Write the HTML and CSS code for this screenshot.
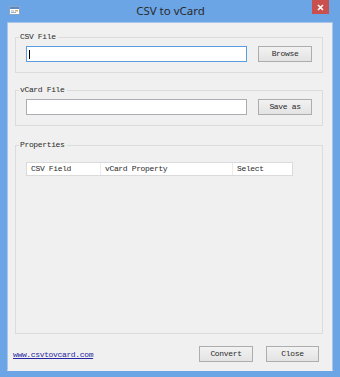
FILE: index.html
```html
<!DOCTYPE html>
<html>
<head>
<meta charset="utf-8">
<link rel="stylesheet" href="styles.css">
</head>
<body>
<div class="window">
  <div class="titlebar">
    <div class="tb-left">
      <svg class="appicon" width="11" height="9" viewBox="0 0 11 9">
        <rect x="0.5" y="0.5" width="10" height="8" fill="#ffffff" stroke="#8aa6c4"/>
        <rect x="1" y="1" width="9" height="2" fill="#5d88c0"/>
        <rect x="2" y="4.5" width="3" height="1" fill="#9bb3cf"/>
        <rect x="2" y="6" width="5" height="1" fill="#9bb3cf"/>
        <rect x="6" y="4" width="3" height="1.5" fill="#e2a85a"/>
      </svg>
    </div>
    <div class="title">CSV to vCard</div>
    <div class="tb-right">
      <div class="close">
        <svg width="7" height="7" viewBox="0 0 7 7"><path d="M1 1 L6 6 M6 1 L1 6" stroke="#ffffff" stroke-width="1.6"/></svg>
      </div>
    </div>
  </div>
  <div class="client">
    <div class="group g-csv">
      <div class="legend">CSV File</div>
      <div class="row">
        <div class="textbox focus"><span class="caret"></span></div>
        <div class="btn">Browse</div>
      </div>
    </div>
    <div class="group g-vcard">
      <div class="legend">vCard File</div>
      <div class="row">
        <div class="textbox"></div>
        <div class="btn">Save as</div>
      </div>
    </div>
    <div class="group g-props">
      <div class="legend">Properties</div>
      <div class="listhead">
        <div class="col c1">CSV Field</div>
        <div class="col c2">vCard Property</div>
        <div class="col c3">Select</div>
      </div>
    </div>
    <div class="bottom">
      <span class="link">www.csvtovcard.com</span>
      <div class="btn b-convert">Convert</div>
      <div class="btn b-close">Close</div>
    </div>
  </div>
</div>
</body>
</html>
```

FILE: styles.css
```css
html, body {
  margin: 0;
  padding: 0;
}
body {
  width: 340px;
  height: 377px;
  overflow: hidden;
  background: #6ba5e5;
}
.window {
  width: 340px;
  height: 377px;
  display: flex;
  flex-direction: column;
  background: #6ba5e5;
}
.titlebar {
  height: 22px;
  display: grid;
  grid-template-columns: 1fr auto 1fr;
}
.tb-left {
  padding: 6px 0 0 9px;
}
.appicon {
  display: block;
}
.title {
  font-family: "Noto Sans", "Open Sans", sans-serif;
  font-size: 11.5px;
  line-height: 22px;
  color: #2a2a2a;
  padding-left: 1px;
}
.tb-right {
  display: flex;
  justify-content: flex-end;
  align-items: flex-start;
}
.close {
  width: 17px;
  height: 14px;
  margin-right: 11px;
  background: #c9504c;
  display: flex;
  align-items: center;
  justify-content: center;
}
.close svg {
  display: block;
}
.client {
  box-sizing: border-box;
  width: 326px;
  height: 349px;
  margin: 0 7px;
  background: #f0f0f0;
  border: 1px solid #a9c6e8;
  border-bottom-color: #f0f0f0;
  display: flex;
  flex-direction: column;
  font-family: "Liberation Mono", "Courier New", monospace;
  font-size: 8px;
  letter-spacing: -0.35px;
  color: #2b2b2b;
}
.group {
  box-sizing: border-box;
  width: 308px;
  margin-left: 7px;
  border: 1px solid #dcdcdc;
}
.g-csv {
  margin-top: 14px;
  height: 36px;
}
.g-vcard {
  margin-top: 17px;
  height: 36px;
}
.g-props {
  margin-top: 19px;
  height: 189px;
}
.legend {
  width: fit-content;
  height: 10px;
  line-height: 10px;
  margin-top: -6px;
  margin-left: 3px;
  padding: 0 2px 0 1px;
  background: #f0f0f0;
  white-space: nowrap;
}
.row {
  display: flex;
  margin-top: 4px;
  margin-left: 10px;
  gap: 11px;
}
.textbox {
  box-sizing: border-box;
  width: 221px;
  height: 16px;
  background: #ffffff;
  border: 1px solid #abadb3;
  display: flex;
  align-items: center;
  padding-left: 2px;
}
.textbox.focus {
  border-color: #5b9de0;
}
.caret {
  width: 1px;
  height: 9px;
  background: #000000;
}
.btn {
  box-sizing: border-box;
  width: 54px;
  height: 16px;
  border: 1px solid #adadad;
  background: linear-gradient(#f2f2f2, #e3e3e3);
  text-align: center;
  line-height: 14px;
  white-space: nowrap;
}
.listhead {
  box-sizing: border-box;
  display: flex;
  width: 267px;
  height: 14px;
  margin-top: 12px;
  margin-left: 10px;
  background: #ffffff;
  border: 1px solid #dadada;
}
.col {
  box-sizing: border-box;
  line-height: 12px;
  padding-left: 4px;
  white-space: nowrap;
}
.c1 {
  width: 74px;
  border-right: 1px solid #ececec;
}
.c2 {
  width: 132px;
  border-right: 1px solid #ececec;
}
.c3 {
  flex: 1;
}
.bottom {
  display: flex;
  align-items: center;
  margin-top: 12px;
  padding-left: 5px;
}
.link {
  color: #2626a3;
  text-decoration: underline;
  white-space: nowrap;
}
.b-convert {
  margin-left: auto;
  width: 54px;
}
.b-close {
  margin-left: 13px;
  margin-right: 13px;
  width: 53px;
}
```
